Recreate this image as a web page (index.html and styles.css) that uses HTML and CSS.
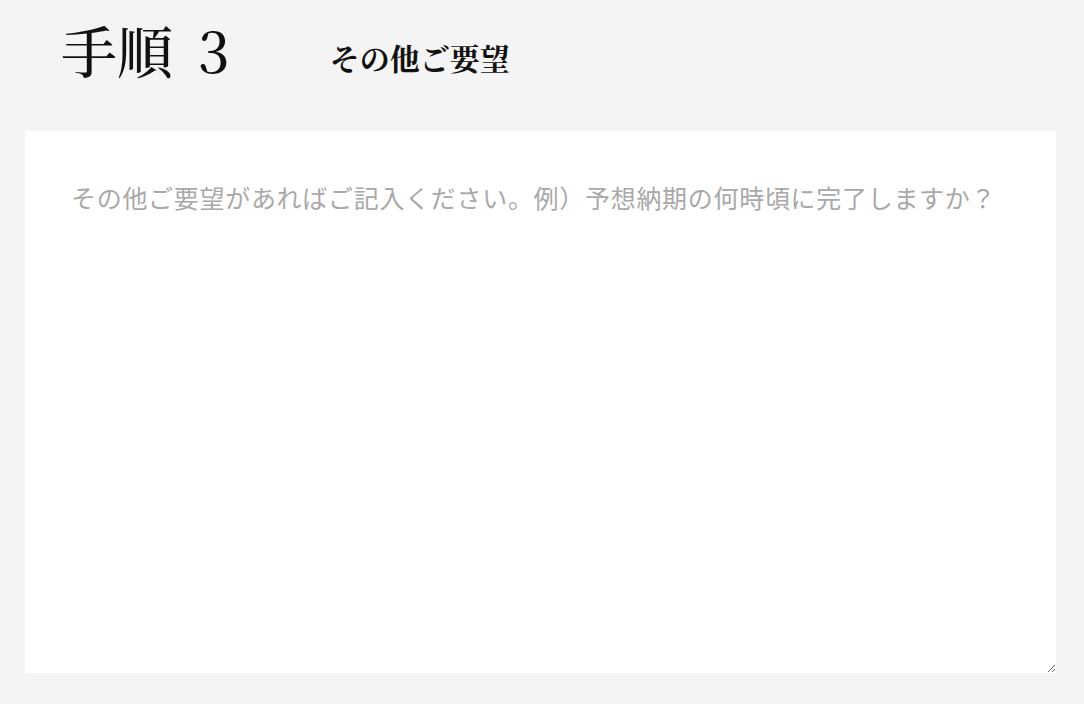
FILE: index.html
```html
<!DOCTYPE html>
<html lang="ja">
<head>
<meta charset="utf-8">
<title>手順 3 その他ご要望</title>
<link rel="stylesheet" href="styles.css">
</head>
<body>
<section class="step">
  <header class="step-head">
    <h2 class="step-num">手順<span class="step-digit">3</span></h2>
    <p class="step-title">その他ご要望</p>
  </header>
  <textarea class="step-input" placeholder="その他ご要望があればご記入ください。例）予想納期の何時頃に完了しますか？"></textarea>
</section>
</body>
</html>
```
FILE: styles.css
```css
html, body {
  margin: 0;
  padding: 0;
  background: #f4f4f4;
}

.step {
  padding: 0 28px 31px 25px;
  display: flex;
  flex-direction: column;
}

.step-head {
  display: flex;
  align-items: flex-start;
  height: 131px;
  padding-left: 36px;
  box-sizing: border-box;
  padding-top: 19px;
}

.step-num {
  margin: 0;
  font-family: "Noto Serif CJK JP", "Liberation Serif", "Noto Sans CJK JP", serif;
  font-weight: 500;
  font-size: 56px;
  line-height: 1.1;
  color: #111;
}

.step-digit {
  margin-left: 25px;
}

.step-title {
  margin: 17px 0 0 100px;
  font-family: "Noto Serif CJK JP", "Noto Sans CJK JP", serif;
  font-weight: 700;
  font-size: 30px;
  line-height: 1.4;
  color: #111;
}

.step-input {
  display: block;
  width: 100%;
  height: 542px;
  box-sizing: border-box;
  border: none;
  outline: none;
  background: #fff;
  padding: 48px 46px;
  font-family: "Noto Sans CJK JP", sans-serif;
  font-size: 25px;
  letter-spacing: 0.7px;
  line-height: 1.5;
  color: #333;
  resize: vertical;
}

.step-input::placeholder {
  color: #a9a9a9;
}
```
